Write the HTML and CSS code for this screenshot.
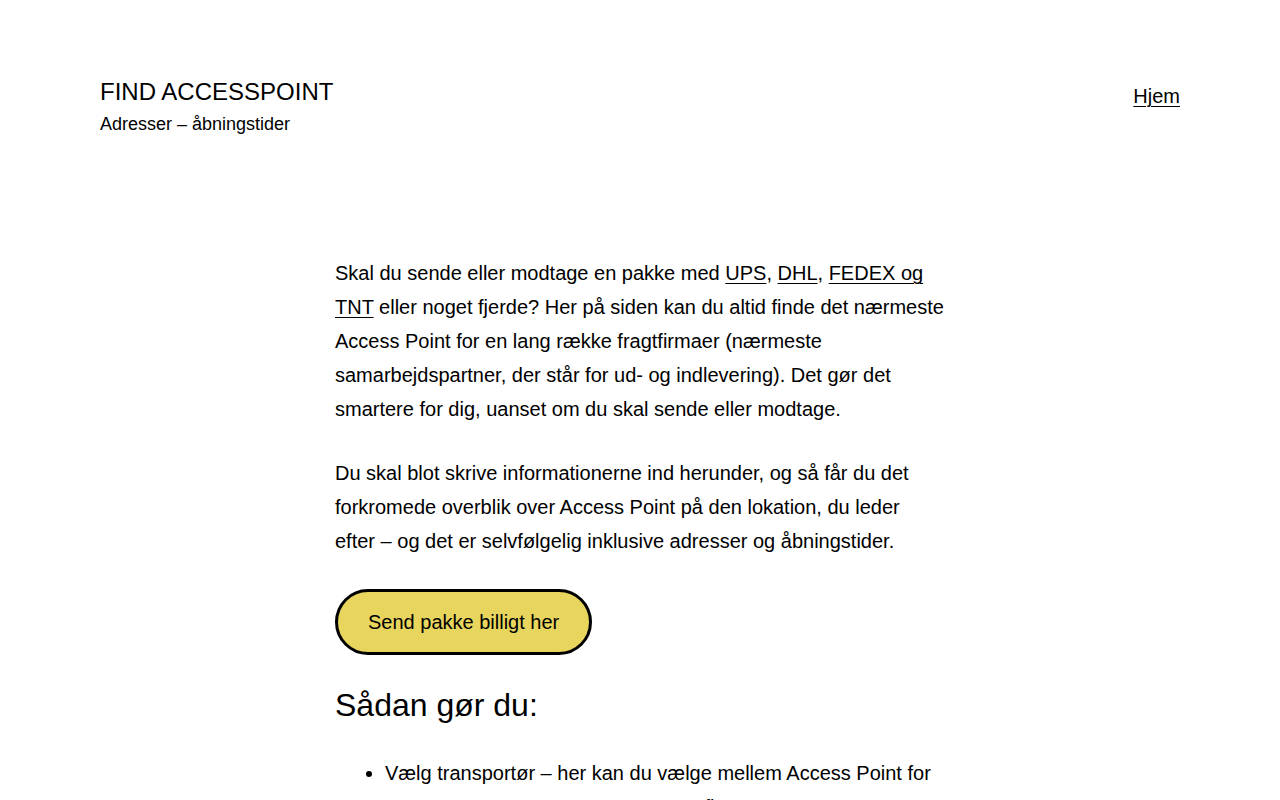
FILE: index.html
```html
<!DOCTYPE html>
<html lang="da">
  <head>
    <meta charset="utf-8">
    <title>Find Accesspoint</title>
    <link rel="stylesheet" href="styles.css">
  </head>
  <body>
    <header class="site-header">
      <div class="branding">
        <p class="site-title">Find Accesspoint</p>
        <p class="site-description">Adresser – åbningstider</p>
      </div>
      <nav class="main-nav">
        <a href="#">Hjem</a>
      </nav>
    </header>

    <main class="content">
      <p>Skal du sende eller modtage en pakke med <a href="#">UPS</a>, <a href="#">DHL</a>, <a href="#">FEDEX og TNT</a> eller noget fjerde? Her på siden kan du altid finde det nærmeste Access Point for en lang række fragtfirmaer (nærmeste samarbejdspartner, der står for ud- og indlevering). Det gør det smartere for dig, uanset om du skal sende eller modtage.</p>
      <p>Du skal blot skrive informationerne ind herunder, og så får du det forkromede overblik over Access Point på den lokation, du leder efter – og det er selvfølgelig inklusive adresser og åbningstider.</p>
      <div class="buttons">
        <a class="button" href="#">Send pakke billigt her</a>
      </div>
      <h2>Sådan gør du:</h2>
      <ul>
        <li>Vælg transportør – her kan du vælge mellem Access Point for UPS, DHL, FEDEX, TNT og mange flere.</li>
        <li>Skriv postnummer eller adresse.</li>
      </ul>
    </main>
  </body>
</html>
```

FILE: styles.css
```css
body {
  margin: 0;
  background-color: #fff;
  color: #000;
  font-family: "Liberation Sans", Arial, sans-serif;
  font-size: 20px;
  line-height: 1.7;
}

a {
  color: #000;
  text-decoration: underline;
  text-underline-offset: 3px;
  text-decoration-thickness: 1px;
}

.site-header {
  display: flex;
  justify-content: space-between;
  align-items: flex-start;
  padding: 76px 100px 0;
}

.site-title {
  margin: 0;
  font-size: 24px;
  line-height: 1.3;
  text-transform: uppercase;
}

.site-description {
  margin: 5px 0 0;
  font-size: 18px;
  line-height: 1.4;
}

.main-nav {
  padding-top: 7px;
  font-size: 20px;
  line-height: 1.3;
}

.content {
  width: 610px;
  margin: 119px auto 0;
}

.content p {
  margin: 0 0 30px;
}

.buttons {
  margin-top: 31px;
  margin-bottom: 30px;
}

.button {
  display: inline-block;
  padding: 15px 30px;
  border: 3px solid #000;
  border-radius: 50px;
  background-color: #e8d55e;
  color: #000;
  font-size: 20px;
  line-height: 30px;
  text-decoration: none;
}

h2 {
  margin: 0 0 29px;
  font-size: 32px;
  font-weight: normal;
  line-height: 1.3;
}

ul {
  margin: 0;
  padding-left: 50px;
}
```
